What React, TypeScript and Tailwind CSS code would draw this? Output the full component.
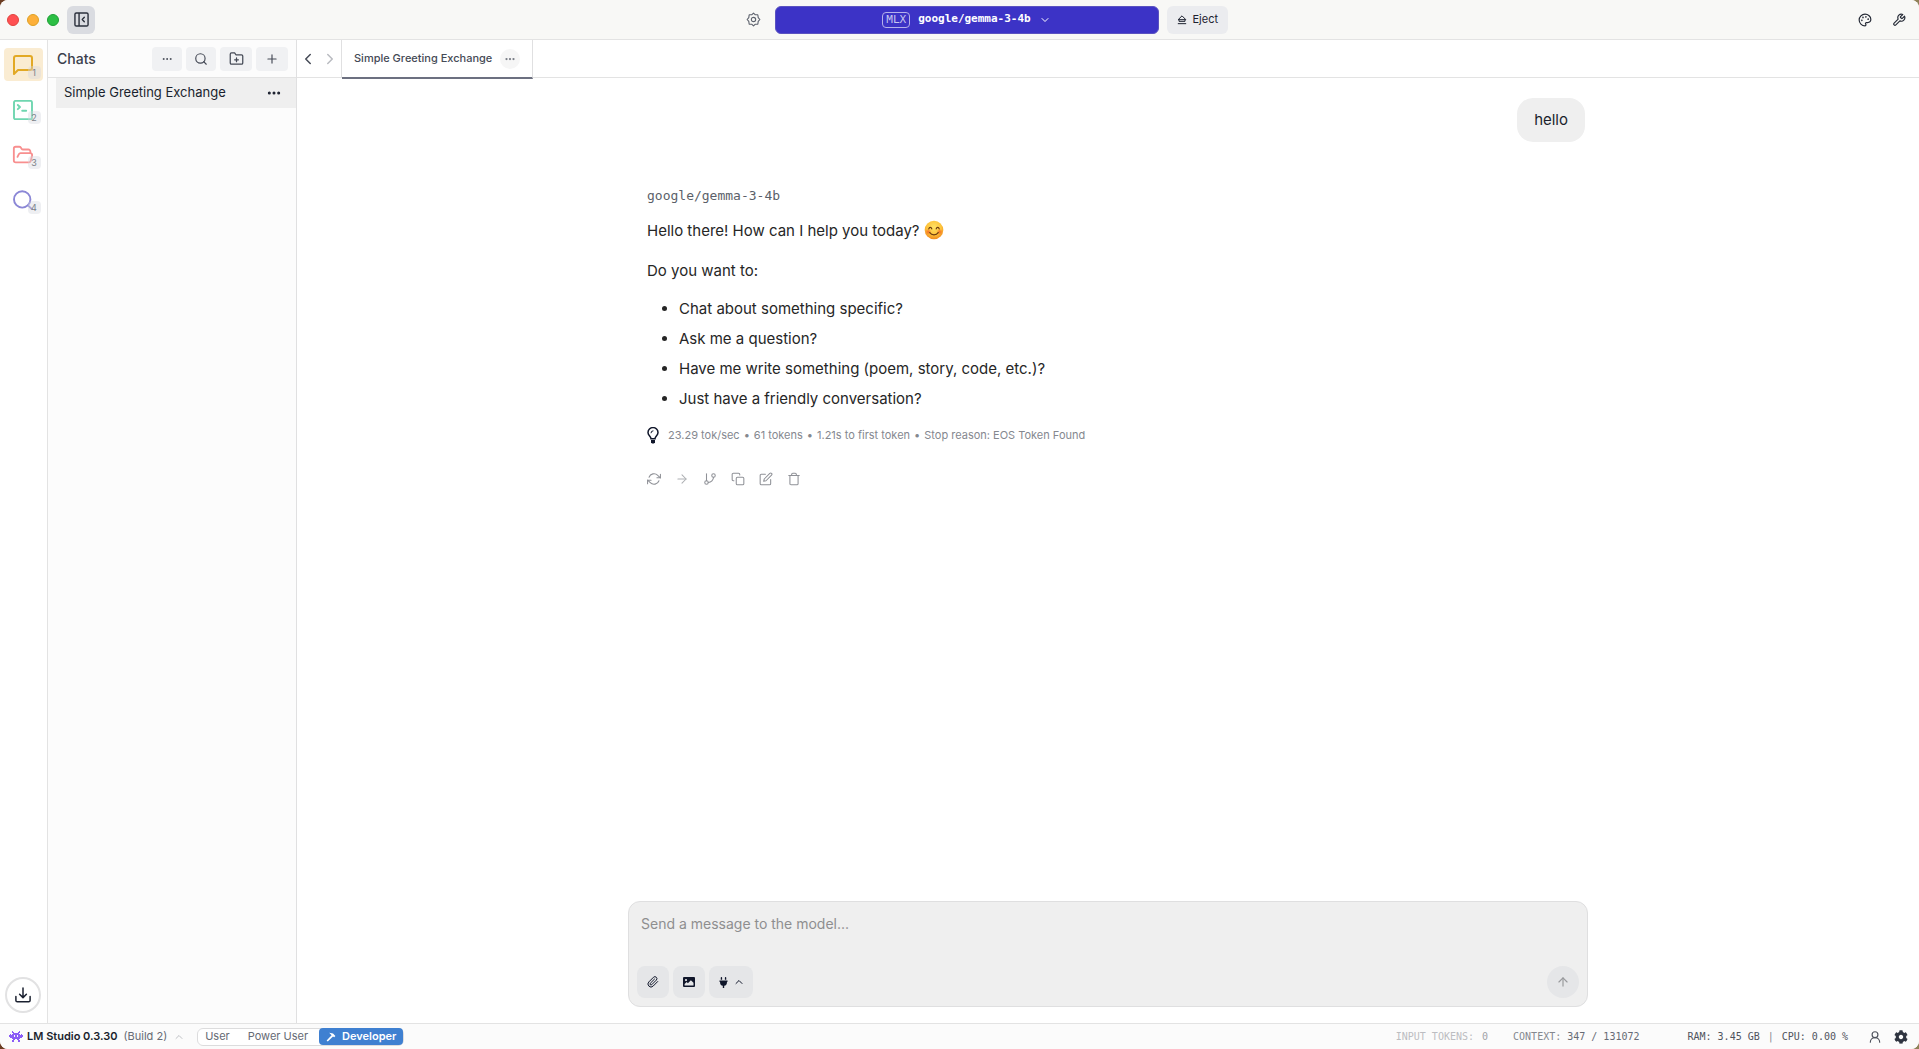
import { Fragment, type ReactNode } from 'react';
import { clsx } from 'clsx';
import {
  FiArrowRight,
  FiArrowUp,
  FiChevronDown,
  FiChevronLeft,
  FiChevronRight,
  FiChevronUp,
  FiCopy,
  FiEdit,
  FiFolderPlus,
  FiGitBranch,
  FiMessageSquare,
  FiMoreHorizontal,
  FiPaperclip,
  FiPlus,
  FiRefreshCw,
  FiSearch,
  FiTrash,
} from 'react-icons/fi';
import { FaCog, FaPlug } from 'react-icons/fa';
import { LuFolderOpen, LuPalette, LuUserRound, LuWrench } from 'react-icons/lu';

const SUGGESTIONS = [
  'Chat about something specific?',
  'Ask me a question?',
  'Have me write something (poem, story, code, etc.)?',
  'Just have a friendly conversation?',
];

const STATS = ['23.29 tok/sec', '61 tokens', '1.21s to first token', 'Stop reason: EOS Token Found'];

function PanelIcon() {
  return (
    <svg viewBox="0 0 16 16" className="size-[15px]" fill="none" stroke="currentColor" strokeWidth="1.5">
      <rect x="1" y="1" width="14" height="14" rx="1.5" />
      <path d="M5.4 1v14" />
      <path d="M11 5.6 8.8 8l2.2 2.4" strokeLinecap="round" strokeLinejoin="round" />
    </svg>
  );
}

function GearOutlineIcon() {
  return (
    <svg viewBox="0 0 16 16" className="size-[15px]" fill="none" stroke="currentColor" strokeWidth="1.2" strokeLinejoin="round">
      <path d="M8 1.2 9.7 2.9 12.6 2.9 13 5.9 14.8 8 13 10.1 12.6 13.1 9.7 13.1 8 14.8 6.3 13.1 3.4 13.1 3 10.1 1.2 8 3 5.9 3.4 2.9 6.3 2.9Z" />
      <circle cx="8" cy="8" r="2.3" />
    </svg>
  );
}

function EjectIcon() {
  return (
    <svg viewBox="0 0 12 12" className="size-[10px]" fill="none" stroke="currentColor" strokeWidth="1.2" strokeLinejoin="round">
      <path d="M6 1 10.6 5.6H1.4Z" />
      <path d="M2.4 5.6v2h7.2v-2M1 10.4h10" />
    </svg>
  );
}

function TerminalIcon() {
  return (
    <svg viewBox="0 0 20 20" className="size-5" fill="none" stroke="currentColor" strokeWidth="1.9" strokeLinecap="round" strokeLinejoin="round">
      <rect x="1" y="0.9" width="18" height="18.4" rx="1.5" />
      <path d="m4.8 5 2.2 2-2.2 2.2M9.2 10.8h4" />
    </svg>
  );
}

function MagnifierIcon() {
  return (
    <svg viewBox="0 0 20 20" className="size-5" fill="none" stroke="currentColor" strokeWidth="1.9" strokeLinecap="round">
      <circle cx="9.2" cy="9.4" r="8.2" />
      <path d="m15 15.4 4.2 4" />
    </svg>
  );
}

function DownloadIcon() {
  return (
    <svg viewBox="0 0 16 16" className="size-4" fill="none" stroke="currentColor" strokeWidth="1.5" strokeLinecap="round" strokeLinejoin="round">
      <path d="M8 1v9.4M4.6 7.2 8 10.6l3.4-3.4M.9 9.4v4c0 .8.6 1.4 1.4 1.4h11.4c.8 0 1.4-.6 1.4-1.4v-4" />
    </svg>
  );
}

function BulbIcon() {
  return (
    <svg viewBox="0 0 12 17" className="h-[17px] w-3" fill="none" stroke="currentColor" strokeWidth="1.5" strokeLinecap="round">
      <path d="M4 11.8C4 9.4 1 8.6 1 5.6a5 5 0 0 1 10 0c0 3-3 3.8-3 6.2Z" />
      <path d="M4 5.8a2 2 0 0 1 2-2" strokeWidth="1" />
      <path d="M4 13h4v2.2L7 16.4H5L4 15.2Z" fill="currentColor" stroke="none" />
    </svg>
  );
}

function ImageIcon() {
  return (
    <svg viewBox="0 0 12 10" className="h-[10px] w-3" fill="currentColor">
      <path fillRule="evenodd" d="M1 0h10a1 1 0 0 1 1 1v8a1 1 0 0 1-1 1H1a1 1 0 0 1-1-1V1a1 1 0 0 1 1-1Zm.6 8.4h8.9V5.8L7.9 3.2 4.9 6.2 3.7 5 1.6 7ZM3 2a1.1 1.1 0 1 0 0 2.2A1.1 1.1 0 0 0 3 2Z" />
    </svg>
  );
}

function InvaderIcon() {
  return (
    <svg viewBox="0 0 14 11" className="h-[11px] w-[14px] text-[#8b5cf6]" fill="currentColor">
      <path
        fillRule="evenodd"
        d="M3 0h1v1h1v1h4V1h1V0h1v2h-1v1h1v1h1V3h1v1h1v2h-1v1h-2v1h-1v1h1v2H9V9H8V8H6v1H5v2H3V9h1V8H3V7H1V6H0V4h1V3h1v1h1V3h1V2H3ZM5 4v2h1V4Zm3 0v2h1V4Z"
      />
    </svg>
  );
}

function HammerIcon() {
  return (
    <svg viewBox="0 0 10 10" className="size-[10px]" fill="currentColor">
      <path d="M3.2.8 7 1.4 9.4 4 8.2 5.2 7 4.6 1.8 9.6.6 8.4 5.6 3.2Z" />
    </svg>
  );
}

function SmileEmoji() {
  return (
    <svg viewBox="0 0 20 20" role="img" aria-label="😊" className="ml-1 inline-block size-5 align-[-4px]">
      <defs>
        <radialGradient id="face" cx="0.5" cy="0.35" r="0.65">
          <stop offset="0" stopColor="#ffe266" />
          <stop offset="0.6" stopColor="#fdc43c" />
          <stop offset="1" stopColor="#f08a1d" />
        </radialGradient>
        <radialGradient id="cheek">
          <stop offset="0" stopColor="#f4511e" stopOpacity="0.75" />
          <stop offset="1" stopColor="#f4511e" stopOpacity="0" />
        </radialGradient>
      </defs>
      <circle cx="10" cy="10" r="9.3" fill="url(#face)" />
      <circle cx="4.3" cy="11.8" r="3" fill="url(#cheek)" />
      <circle cx="15.7" cy="11.8" r="3" fill="url(#cheek)" />
      <g fill="none" stroke="#6b3a10" strokeWidth="1.2" strokeLinecap="round">
        <path d="M4.8 8.8c.5-1.8 2.5-1.8 3 0M12.2 8.8c.5-1.8 2.5-1.8 3 0" />
        <path d="M5.8 12.6c1.8 2.9 6.6 2.9 8.4 0" />
      </g>
    </svg>
  );
}

function NavItem({ label, index, color, active, children }: {
  label: string;
  index: number;
  color: string;
  active?: boolean;
  children: ReactNode;
}) {
  return (
    <button
      aria-label={label}
      className={clsx('relative flex h-[33px] w-[39px] items-center justify-center rounded pr-px', color, active && 'bg-[#faecd2]')}
    >
      {children}
      <span className="absolute right-0.5 bottom-0.5 flex h-[13px] w-[13px] items-center justify-center rounded bg-[#d4d7de]/40 text-[9px] text-[#7b7f88]">
        {index}
      </span>
    </button>
  );
}

function SquareButton({ label, wide, children }: { label: string; wide?: boolean; children: ReactNode }) {
  return (
    <button
      aria-label={label}
      className={clsx('flex h-6 items-center justify-center rounded bg-[#f0f1f3] text-[#454a56]', wide ? 'w-8' : 'w-[30px]')}
    >
      {children}
    </button>
  );
}

function TitleBar() {
  return (
    <header className="flex h-10 shrink-0 items-center border-b border-[#e3e3e3] bg-[#f8f8f6] px-[7px]">
      <div className="flex flex-1 items-center">
        <div className="flex gap-2">
          <span className="size-3 rounded-full border border-[#e0443e] bg-[#ff5052]" />
          <span className="size-3 rounded-full border border-[#dea123] bg-[#fdb03a]" />
          <span className="size-3 rounded-full border border-[#1fa035] bg-[#2cbf44]" />
        </div>
        <button aria-label="Toggle sidebar" className="ml-2 flex h-7 w-7 items-center justify-center rounded-md bg-[#dadce1] text-[#2b303c]">
          <PanelIcon />
        </button>
        <button aria-label="Model settings" className="ml-auto text-[#5d626d]">
          <GearOutlineIcon />
        </button>
      </div>
      <button className="ml-[14px] flex h-7 w-[384px] items-center justify-center gap-2 rounded-md border border-[#5a52c0] bg-[#3c33c6] font-['DejaVu_Sans_Mono',monospace] text-[11px] text-white">
        <span className="rounded border border-[#b5b1ea] px-[3px] leading-[14px] text-[#c6c3ef]">MLX</span>
        <span className="font-bold">google/gemma-3-4b</span>
        <FiChevronDown className="size-3" />
      </button>
      <div className="flex flex-1 items-center justify-between">
        <button className="ml-2 flex h-7 items-center gap-1.5 rounded-md bg-[#ebecef] px-[10px] text-[11px] text-[#1d2230]">
          <EjectIcon />
          Eject
        </button>
        <div className="flex gap-5 pr-1.5 text-[#252a36]">
          <button aria-label="Appearance">
            <LuPalette className="size-[14px]" />
          </button>
          <button aria-label="Tools">
            <LuWrench className="size-[14px]" />
          </button>
        </div>
      </div>
    </header>
  );
}

function NavRail() {
  return (
    <nav className="flex w-12 shrink-0 flex-col items-center gap-3 border-r border-[#e3e3e3] bg-white pt-2 pr-px pb-[10px]">
      <NavItem label="Chat" index={1} color="text-[#e2a925]" active>
        <FiMessageSquare className="size-6" strokeWidth={2} />
      </NavItem>
      <NavItem label="Developer" index={2} color="text-[#6fd6b0]">
        <TerminalIcon />
      </NavItem>
      <NavItem label="My Models" index={3} color="text-[#f88f8f]">
        <LuFolderOpen className="size-[22px]" />
      </NavItem>
      <NavItem label="Discover" index={4} color="text-[#8b87d6]">
        <MagnifierIcon />
      </NavItem>
      <button aria-label="Downloads" className="mt-auto flex size-9 items-center justify-center rounded-full border-2 border-[#e2e2e3] text-[#1b2130]">
        <DownloadIcon />
      </button>
    </nav>
  );
}

function ChatList() {
  return (
    <aside className="flex w-[249px] shrink-0 flex-col border-r border-[#e0e0e1] bg-[#fcfcfc]">
      <div className="flex h-[38px] items-center justify-between border-b border-[#e3e3e3] pr-2 pl-[9px]">
        <h2 className="text-sm font-medium text-[#3b404c]">Chats</h2>
        <div className="flex gap-1">
          <SquareButton label="More">
            <FiMoreHorizontal className="size-3" />
          </SquareButton>
          <SquareButton label="Search chats">
            <FiSearch className="size-[14px]" />
          </SquareButton>
          <SquareButton label="New folder" wide>
            <FiFolderPlus className="size-[15px]" />
          </SquareButton>
          <SquareButton label="New chat" wide>
            <FiPlus className="size-[14px]" />
          </SquareButton>
        </div>
      </div>
      <div className="ml-2 flex h-[30px] items-center justify-between bg-[#efefef] pr-[14px] pl-2 text-[#1a1f2d]">
        <a href="#chat" className="text-[13px]">Simple Greeting Exchange</a>
        <button aria-label="Chat options">
          <FiMoreHorizontal className="size-4" strokeWidth={2.5} />
        </button>
      </div>
    </aside>
  );
}

function TabBar() {
  return (
    <div className="flex h-[38px] shrink-0 border-b border-[#e3e3e3]">
      <div className="flex w-[45px] items-center justify-between border-r border-[#e0e0e1] px-0.5">
        <button aria-label="Back" className="text-[#454a56]">
          <FiChevronLeft className="size-[18px]" />
        </button>
        <button aria-label="Forward" className="text-[#b9bbc0]">
          <FiChevronRight className="size-[18px]" />
        </button>
      </div>
      <div className="-mb-0.5 flex items-center gap-2 border-r border-b-2 border-r-[#e0e0e1] border-b-[#6c7080] px-3">
        <a href="#chat" className="text-[11px] font-medium text-[#454a56]">Simple Greeting Exchange</a>
        <button aria-label="Tab options" className="flex size-5 items-center justify-center rounded-full bg-[#f6f6f6] text-[#777b84]">
          <FiMoreHorizontal className="size-3" strokeWidth={2.5} />
        </button>
      </div>
    </div>
  );
}

function Conversation() {
  return (
    <div className="mx-auto flex w-full max-w-[960px] flex-1 flex-col pt-5 pr-[3px] pl-[19px]">
      <p className="self-end rounded-2xl bg-[#efefef] px-[17px] text-[15px] leading-[44px] text-[#1a1f2d]">hello</p>
      <article className="mt-11 text-[15px] text-[#262626]">
        <h3 className="font-['DejaVu_Sans_Mono',monospace] text-[13px] leading-5 text-[#5b5f69]">google/gemma-3-4b</h3>
        <p className="mt-[10px] leading-[30px]">
          Hello there! How can I help you today?
          <SmileEmoji />
        </p>
        <p className="mt-[10px] leading-[30px]">Do you want to:</p>
        <ul className="mt-2 list-disc pl-8 leading-[30px]">
          {SUGGESTIONS.map((item) => (
            <li key={item}>{item}</li>
          ))}
        </ul>
        <div className="mt-[10px] flex h-[22px] items-center gap-[9px] text-[11px] text-[#85888f]">
          <span className="text-[#10162a]">
            <BulbIcon />
          </span>
          <p className="flex gap-1">
            {STATS.map((stat, i) => (
              <Fragment key={stat}>
                {i > 0 && <span>•</span>}
                <span>{stat}</span>
              </Fragment>
            ))}
          </p>
        </div>
        <div className="mt-6 flex h-[18px] items-center gap-[14px] text-[#8f9197]">
          <button aria-label="Regenerate"><FiRefreshCw className="size-[14px]" strokeWidth={1.8} /></button>
          <button aria-label="Continue" className="text-[#adafb3]"><FiArrowRight className="size-[14px]" strokeWidth={1.8} /></button>
          <button aria-label="Branch"><FiGitBranch className="size-[14px]" strokeWidth={1.8} /></button>
          <button aria-label="Copy"><FiCopy className="size-[14px]" strokeWidth={1.8} /></button>
          <button aria-label="Edit"><FiEdit className="size-[14px]" strokeWidth={1.8} /></button>
          <button aria-label="Delete"><FiTrash className="size-[14px]" strokeWidth={1.8} /></button>
        </div>
      </article>
    </div>
  );
}

function Composer() {
  return (
    <form className="mx-auto mb-4 flex w-full max-w-[960px] flex-col rounded-xl border border-[#dfdfe0] bg-[#efefef] p-2">
      <textarea
        aria-label="Message"
        rows={2}
        placeholder="Send a message to the model..."
        className="h-14 resize-none px-1 pt-1 text-sm text-[#1a1f2d] outline-none placeholder:text-[#8e8e8f]"
      />
      <div className="flex items-center gap-1 text-[#10162a]">
        <button type="button" aria-label="Attach file" className="flex size-8 items-center justify-center rounded-lg bg-[#e5e6e8]">
          <FiPaperclip className="size-3" />
        </button>
        <button type="button" aria-label="Attach image" className="flex size-8 items-center justify-center rounded-lg bg-[#e5e6e8]">
          <ImageIcon />
        </button>
        <button type="button" aria-label="Integrations" className="flex h-8 w-11 items-center justify-center gap-1 rounded-lg bg-[#e5e6e8]">
          <FaPlug className="size-[11px]" />
          <FiChevronUp className="size-3" />
        </button>
        <button type="submit" aria-label="Send" className="ml-auto flex size-8 items-center justify-center rounded-full bg-[#e5e6e8] text-[#98999c]">
          <FiArrowUp className="size-[14px]" />
        </button>
      </div>
    </form>
  );
}

function StatusBar() {
  return (
    <footer className="flex h-[26px] shrink-0 items-center border-t border-[#e3e3e3] bg-[#fbfbfb] pr-[11px] pl-[9px] text-[11px] text-[#666a74]">
      <InvaderIcon />
      <span className="ml-1 font-semibold text-[#1a1f2d]">LM Studio 0.3.30</span>
      <span className="ml-1.5">(Build 2)</span>
      <FiChevronUp className="ml-1.5 size-3 text-[#c0c2c6]" />
      <div className="ml-3 flex h-[18px] items-center rounded-md border border-[#dcdcdd] bg-white">
        <button className="px-[7px]">User</button>
        <button className="px-[11px]">Power User</button>
        <button className="flex h-[17px] items-center gap-1.5 rounded bg-[#3f80d1] px-[7px] font-semibold text-white">
          <HammerIcon />
          Developer
        </button>
      </div>
      <div className="ml-auto flex items-center font-['DejaVu_Sans_Mono',monospace] text-[10px] text-[#4f535d]">
        <span className="text-[#bcbdc1]">INPUT TOKENS:</span>
        <span className="ml-2 text-[#a0a2a7]">0</span>
        <span className="ml-[25px] text-[#85888f]">CONTEXT:</span>
        <span className="ml-1.5 text-[#666a74]">347 / 131072</span>
        <span className="ml-12">RAM: 3.45 GB</span>
        <span className="mx-2 text-[#85888f]">|</span>
        <span>CPU: 0.00 %</span>
      </div>
      <button aria-label="Account" className="ml-5 text-[#4f535d]">
        <LuUserRound className="size-[14px]" />
      </button>
      <button aria-label="Settings" className="ml-3 text-[#2f3440]">
        <FaCog className="size-[14px]" />
      </button>
    </footer>
  );
}

export default function App() {
  return (
    <div className="h-screen bg-gradient-to-r from-[#6b3d22] to-[#8f8158] font-['Inter',sans-serif]">
      <div className="flex h-full flex-col overflow-hidden rounded-lg bg-white">
        <TitleBar />
        <div className="flex min-h-0 flex-1">
          <NavRail />
          <ChatList />
          <main className="flex min-w-0 flex-1 flex-col">
            <TabBar />
            <Conversation />
            <Composer />
          </main>
        </div>
        <StatusBar />
      </div>
    </div>
  );
}
